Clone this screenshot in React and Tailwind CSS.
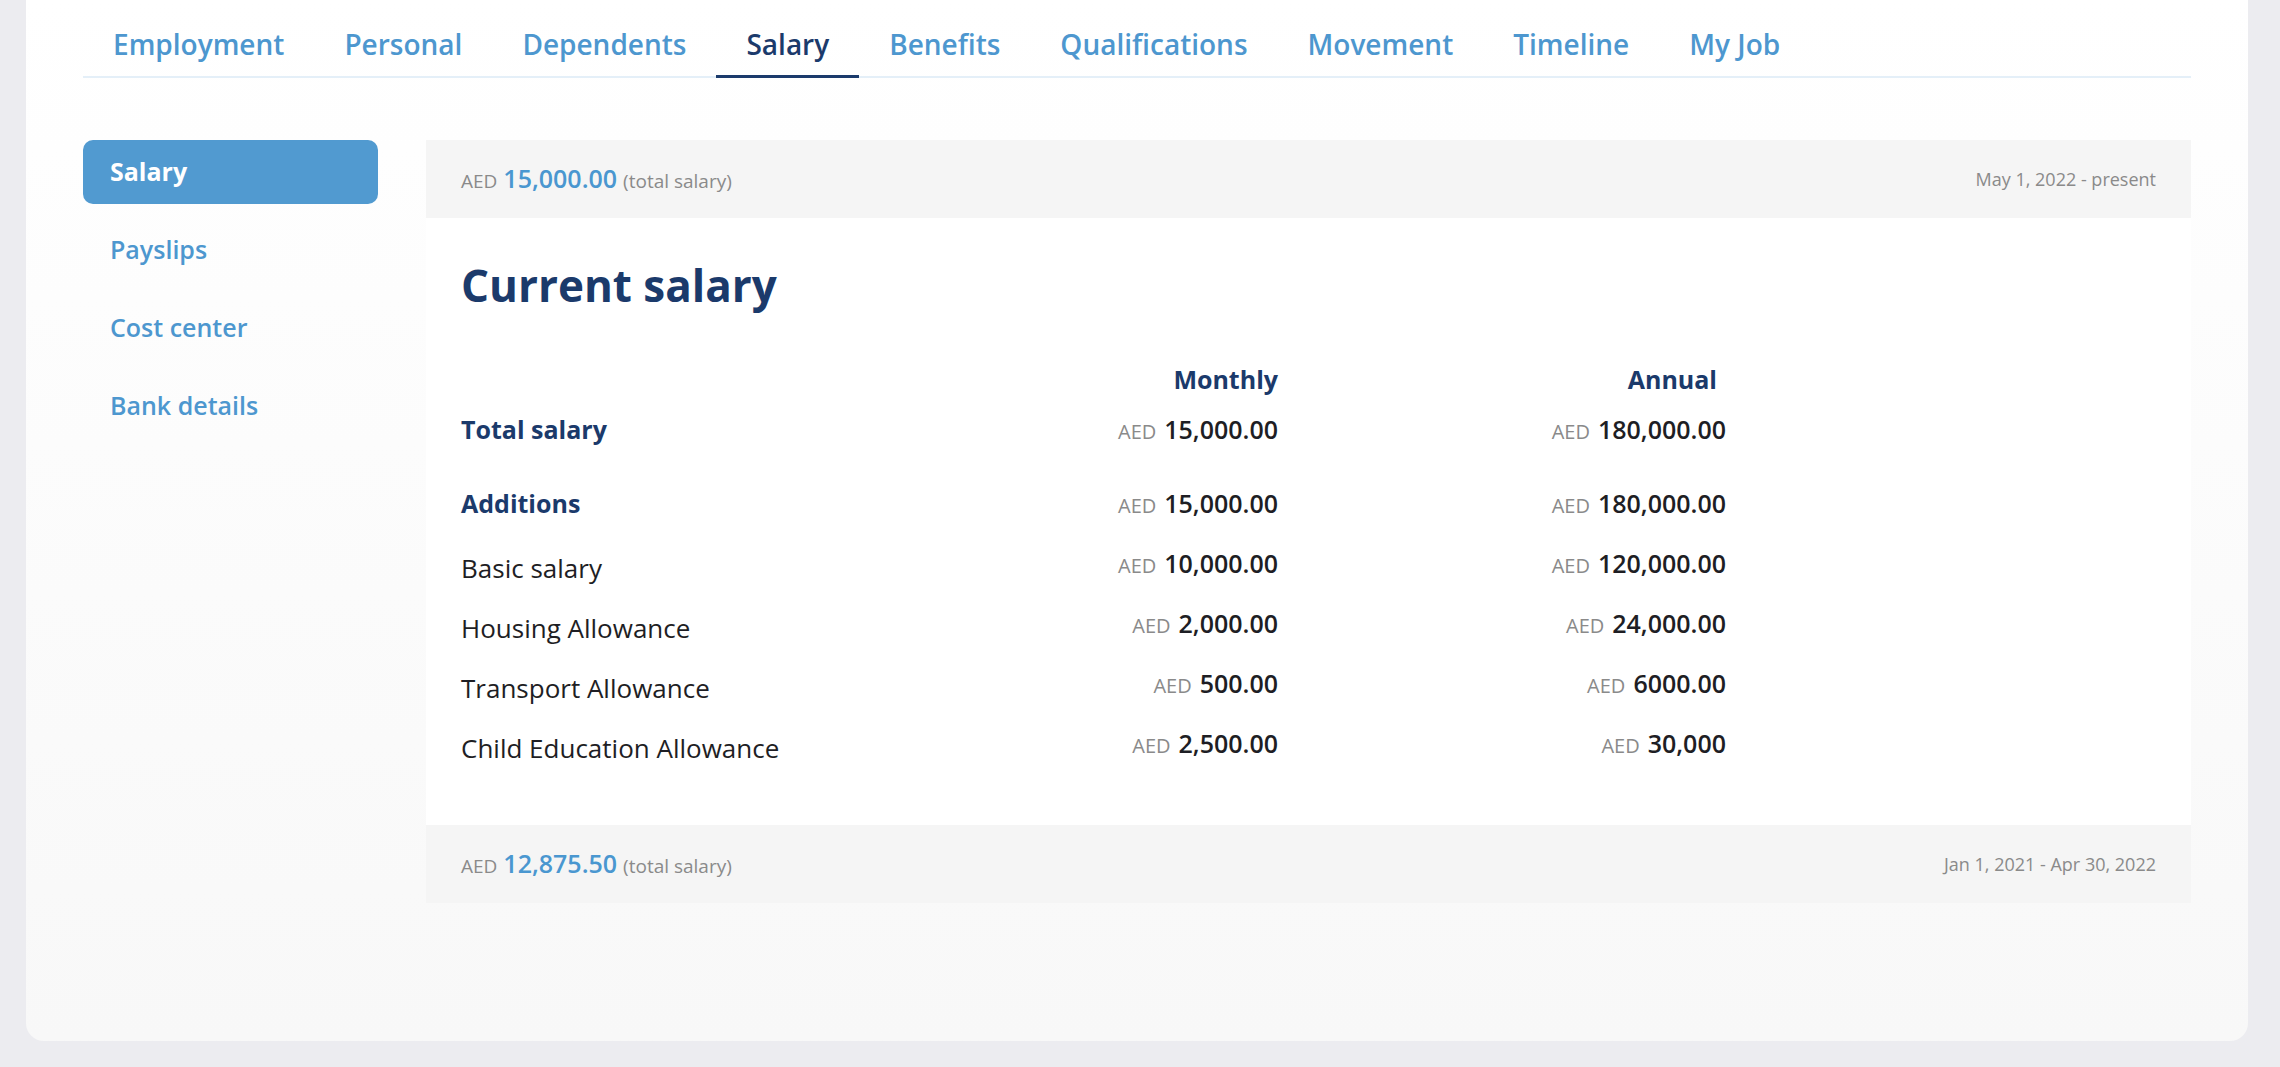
export default function App() {
  const tabs = ["Employment","Personal","Dependents","Salary","Benefits","Qualifications","Movement","Timeline","My Job"];
  const side = ["Salary","Payslips","Cost center","Bank details"];
  const rows = [
    ["Basic salary","10,000.00","120,000.00"],
    ["Housing Allowance","2,000.00","24,000.00"],
    ["Transport Allowance","500.00","6000.00"],
    ["Child Education Allowance","2,500.00","30,000"],
  ];
  const Amt = ({v}) => (
    <span><span className="text-[20px] text-[#8a8a8a] mr-[8px]">AED</span><span className="text-[25px] font-semibold text-[#1e1e24]">{v}</span></span>
  );
  return (
    <div className="w-[2280px] h-[1067px] bg-[#ececf0] pl-[26px] pr-[32px] pb-[26px] overflow-hidden" style={{fontFamily:'"Open Sans", sans-serif'}}>
      <div className="h-full bg-gradient-to-b from-white to-[#f8f8f8] rounded-b-[18px] px-[57px]">
        <div className="flex h-[78px] items-end border-b-2 border-[#e4eff8]">
          {tabs.map(t => (
            <div key={t} className={`px-[30px] h-[78px] pt-[12px] flex items-center text-[28px] font-semibold -mb-[2px] ${t==="Salary" ? "text-[#1b3a6b] font-bold border-b-[3px] border-[#1b3a6b]" : "text-[#4d97cf] border-b-[3px] border-transparent"}`}>{t}</div>
          ))}
        </div>
        <div className="flex mt-[62px]">
          <div className="w-[343px] flex flex-col">
            {side.map((s,i) => (
              <div key={s} className={`w-[295px] h-[64px] flex items-center px-[27px] text-[25px] rounded-[10px] ${i===0 ? "bg-[#519ad0] text-white font-bold" : "text-[#4d97cf] font-semibold mt-[14px]"}`}>{s}</div>
            ))}
          </div>
          <div className="w-[1765px]">
            <div className="h-[78px] bg-[#f5f5f5] flex items-center justify-between px-[35px]">
              <div className="flex items-baseline gap-[6px]"><span className="text-[19px] text-[#8a8a8a]">AED</span><span className="text-[25px] font-semibold text-[#4a97d0]">15,000.00</span><span className="text-[19px] text-[#8a8a8a]">(total salary)</span></div>
              <span className="text-[18px] text-[#8a8a8a]">May 1, 2022 - present</span>
            </div>
            <div className="bg-white h-[607px] px-[35px] pt-[36px]">
              <h1 className="text-[44px] font-bold text-[#1b3a6b] leading-[62px]">Current salary</h1>
              <div className="flex mt-[44px] h-[40px] items-center text-[25px] font-bold text-[#1b3a6b]">
                <div className="w-[500px]"></div>
                <div className="w-[317px] text-right">Monthly</div>
                <div className="w-[448px] text-right pr-[9px]">Annual</div>
              </div>
              <div className="flex h-[60px] items-center">
                <div className="w-[500px] text-[25px] font-bold text-[#1b3a6b]">Total salary</div>
                <div className="w-[317px] text-right"><Amt v="15,000.00"/></div>
                <div className="w-[448px] text-right"><Amt v="180,000.00"/></div>
              </div>
              <div className="flex h-[60px] items-center mt-[14px]">
                <div className="w-[500px] text-[25px] font-bold text-[#1b3a6b]">Additions</div>
                <div className="w-[317px] text-right"><Amt v="15,000.00"/></div>
                <div className="w-[448px] text-right"><Amt v="180,000.00"/></div>
              </div>
              {rows.map(r => (
                <div key={r[0]} className="flex h-[60px] items-center">
                  <div className="w-[500px] text-[26px] font-medium text-[#1e1e24] pt-[8px]">{r[0]}</div>
                  <div className="w-[317px] text-right"><Amt v={r[1]}/></div>
                  <div className="w-[448px] text-right"><Amt v={r[2]}/></div>
                </div>
              ))}
            </div>
            <div className="h-[78px] bg-[#f5f5f5] flex items-center justify-between px-[35px]">
              <div className="flex items-baseline gap-[6px]"><span className="text-[19px] text-[#8a8a8a]">AED</span><span className="text-[25px] font-semibold text-[#4a97d0]">12,875.50</span><span className="text-[19px] text-[#8a8a8a]">(total salary)</span></div>
              <span className="text-[18px] text-[#8a8a8a]">Jan 1, 2021 - Apr 30, 2022</span>
            </div>
          </div>
        </div>
      </div>
    </div>
  );
}
